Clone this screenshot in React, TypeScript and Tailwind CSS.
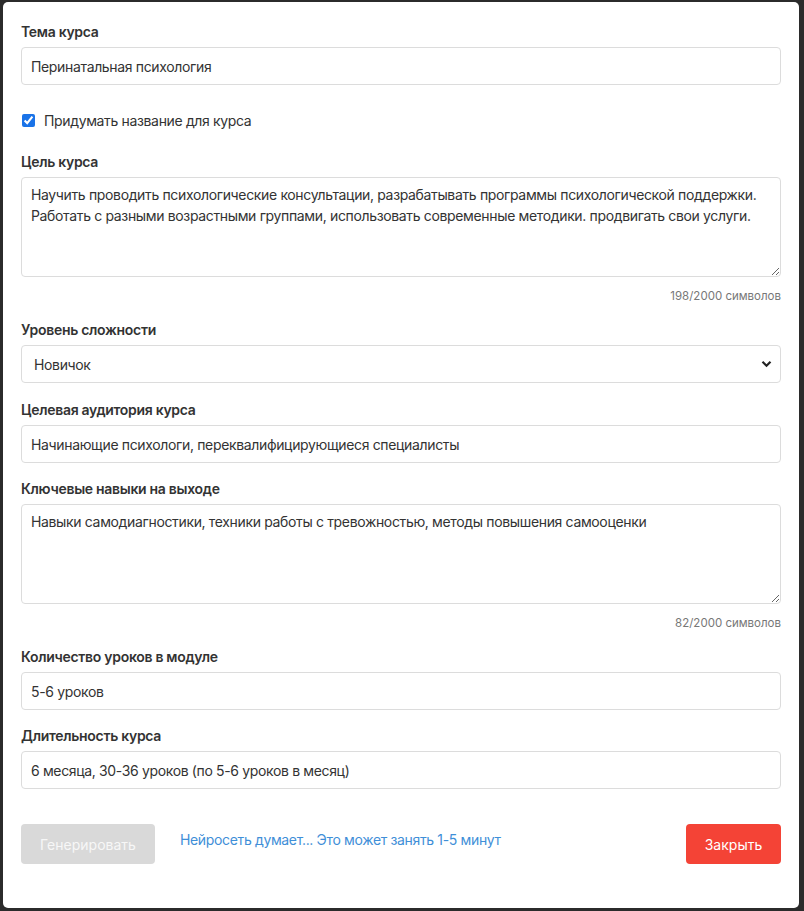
import { useState } from 'react';

const labelCls = 'block text-[14px] leading-[20px] font-semibold text-[#333] tracking-[-0.3px] mb-[5px]';
const inputCls =
  'block w-full h-[38px] rounded-[4px] border border-[#dcdcdc] bg-white px-[9px] text-[14px] text-[#333] tracking-[-0.35px] outline-none';
const areaCls =
  'block w-full h-[100px] rounded-[4px] border border-[#dcdcdc] bg-white px-[9px] pt-[6px] pb-[8px] text-[14px] leading-[21px] text-[#333] tracking-[-0.35px] outline-none';

function Field({ label, children, className = '' }: { label: string; children: React.ReactNode; className?: string }) {
  return (
    <div className={className}>
      <label className={labelCls}>{label}</label>
      {children}
    </div>
  );
}

function Counter({ value }: { value: string }) {
  return <div className="mt-[10px] text-right text-[11.5px] leading-[18px] text-[#777]">{value.length}/2000 символов</div>;
}

export default function App() {
  const [topic, setTopic] = useState('Перинатальная психология');
  const [withTitle, setWithTitle] = useState(true);
  const [goal, setGoal] = useState(
    'Научить проводить психологические консультации, разрабатывать программы психологической поддержки. Работать с разными возрастными группами, использовать современные методики. продвигать свои услуги.',
  );
  const [level, setLevel] = useState('novice');
  const [audience, setAudience] = useState('Начинающие психологи, переквалифицирующиеся специалисты');
  const [skills, setSkills] = useState('Навыки самодиагностики, техники работы с тревожностью, методы повышения самооценки');
  const [lessons, setLessons] = useState('5-6 уроков');
  const [duration, setDuration] = useState('6 месяца, 30-36 уроков (по 5-6 уроков в месяц)');

  return (
    <div
      className="min-h-[911px] w-[804px] bg-[#2b2b2b] pt-[2px] pl-[3px] pr-[5px] pb-[3px]"
      style={{ fontFamily: 'Inter, "Noto Sans", sans-serif' }}
    >
      <div className="h-[906px] rounded-[5px] bg-white px-[18px] pt-[20px]">
        <Field label="Тема курса">
          <input className={inputCls} value={topic} onChange={(e) => setTopic(e.target.value)} />
        </Field>

        <label className="mt-[25px] flex h-[20px] items-center gap-[9px] text-[14px] text-[#333] tracking-[-0.35px]">
          <input
            type="checkbox"
            className="ml-[1px] h-[13px] w-[13px] accent-[#1a73e8]"
            checked={withTitle}
            onChange={(e) => setWithTitle(e.target.checked)}
          />
          Придумать название для курса
        </label>

        <Field label="Цель курса" className="mt-[22px]">
          <textarea className={areaCls} value={goal} onChange={(e) => setGoal(e.target.value)} />
          <Counter value={goal} />
        </Field>

        <Field label="Уровень сложности" className="mt-[15px]">
          <div className="relative">
            <select
              className={inputCls + ' appearance-none pl-[12px]'}
              value={level}
              onChange={(e) => setLevel(e.target.value)}
            >
              <option value="novice">Новичок</option>
              <option value="middle">Средний</option>
              <option value="pro">Продвинутый</option>
            </select>
            <svg
              className="pointer-events-none absolute right-[9px] top-[15px]"
              width="11"
              height="8"
              viewBox="0 0 11 8"
              fill="none"
            >
              <path d="M1.5 1.8 5.5 5.8 9.5 1.8" stroke="#222" strokeWidth="2.2" />
            </svg>
          </div>
        </Field>

        <Field label="Целевая аудитория курса" className="mt-[17px]">
          <input className={inputCls} value={audience} onChange={(e) => setAudience(e.target.value)} />
        </Field>

        <Field label="Ключевые навыки на выходе" className="mt-[16px]">
          <textarea className={areaCls} value={skills} onChange={(e) => setSkills(e.target.value)} />
          <Counter value={skills} />
        </Field>

        <Field label="Количество уроков в модуле" className="mt-[15px]">
          <input className={inputCls} value={lessons} onChange={(e) => setLessons(e.target.value)} />
        </Field>

        <Field label="Длительность курса" className="mt-[16px]">
          <input className={inputCls} value={duration} onChange={(e) => setDuration(e.target.value)} />
        </Field>

        <div className="mt-[35px] flex items-center">
          <button
            type="button"
            disabled
            className="h-[40px] w-[134px] rounded-[4px] bg-[#d9d9d9] text-[14px] text-[#f7f7f7]"
          >
            Генерировать
          </button>
          <span className="ml-[25px] -mt-[10px] text-[14px] tracking-[-0.35px] text-[#3f8fd8]">
            Нейросеть думает... Это может занять 1-5 минут
          </span>
          <button
            type="button"
            className="ml-auto h-[40px] w-[95px] rounded-[4px] bg-[#f44336] text-[14px] text-white"
          >
            Закрыть
          </button>
        </div>
      </div>
    </div>
  );
}
